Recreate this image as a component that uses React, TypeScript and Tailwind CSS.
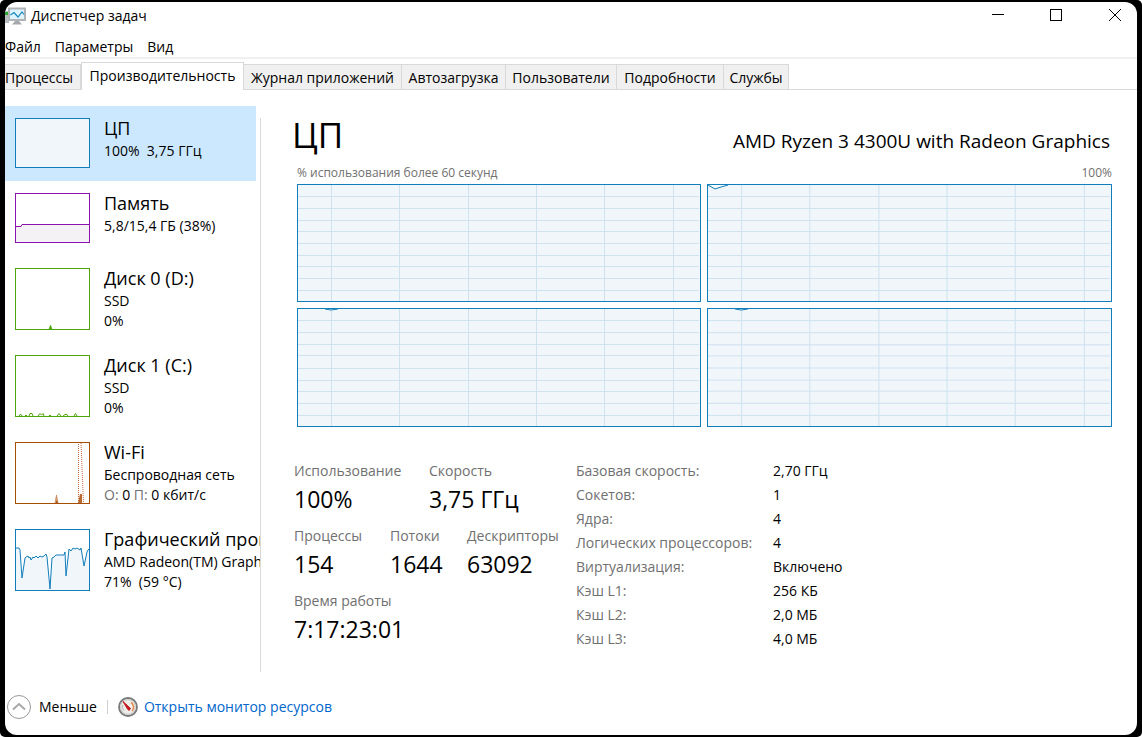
import type { ReactNode } from "react";

const tabs = [
  { label: "Процессы", cls: "w-[76px] justify-start" },
  { label: "Производительность", cls: "w-[163px] justify-center" },
  { label: "Журнал приложений", cls: "w-[158px] justify-center" },
  { label: "Автозагрузка", cls: "w-[104px] justify-center" },
  { label: "Пользователи", cls: "w-[111px] justify-center" },
  { label: "Подробности", cls: "w-[107px] justify-center" },
  { label: "Службы", cls: "w-[65px] justify-center" },
];

const gpuLine =
  "0,18 3,18 4,20 6,48 9,28 10,27 12,26 13,28 14,27 15,30 17,27 18,28 20,26 22,28 24,26 26,27 28,26 30,24 31,27 34,59 36,28 38,27 40,25 48,25 49,22 50,46 53,19 55,21 57,18 59,19 61,18 64,20 65,18 68,36 71,22 72,20 74,18";

type Resource = { name: string; lines: ReactNode[]; short?: boolean; border: string; graph: ReactNode };

const resources: Resource[] = [
  {
    name: "ЦП",
    lines: ["100%  3,75 ГГц"],
    short: true,
    border: "border-[#117dbb] bg-[#f1f6fa]",
    graph: null,
  },
  {
    name: "Память",
    lines: ["5,8/15,4 ГБ (38%)"],
    short: true,
    border: "border-[#8b12ae] bg-white",
    graph: (
      <>
        <path d="M0 32.500H5L6 30.500H73V48H0Z" fill="#f4f2f4" />
        <path d="M0 32.500H5L6 30.500H73" fill="none" stroke="#8b12ae" />
      </>
    ),
  },
  {
    name: "Диск 0 (D:)",
    lines: ["SSD", "0%"],
    border: "border-[#4da60c] bg-white",
    graph: <path d="M33 60L34.500 56L36 60Z" fill="#4da60c" stroke="#4da60c" strokeWidth=".5" />,
  },
  {
    name: "Диск 1 (C:)",
    lines: ["SSD", "0%"],
    border: "border-[#4da60c] bg-white",
    graph: (
      <path
        d="M3 60L4.500 58L6 60M9 60L10 59L11 60M13 60L14 57.500H16L17 60M22 60L24 57.500L25.500 59L27 57.500L28 60M33 60L34 59L35 60M41 60L43 57.500L45 60M47 60L49 58.500H51L52 60M58 60L59.500 57.500L61 60"
        fill="none"
        stroke="#4da60c"
      />
    ),
  },
  {
    name: "Wi-Fi",
    lines: [
      "Беспроводная сеть",
      <>
        <span className="text-[#707070]">О:</span> 0 <span className="text-[#707070]">П:</span> 0 кбит/с
      </>,
    ],
    border: "border-[#a74f01] bg-white",
    graph: (
      <>
        <path d="M39 60L40.500 52L42 60" fill="#d9a680" stroke="#c67a4c" strokeWidth=".7" />
        <path d="M40 60L40.500 57L42 60Z" fill="#a74f01" />
        <path d="M62.500 60V0M65 0L66 24L67.500 60" fill="none" stroke="#c8663a" strokeDasharray="1 1" />
        <path d="M62 60L64 51H66V60Z" fill="#b86a30" />
      </>
    ),
  },
  {
    name: "Графический процессор 0",
    lines: ["AMD Radeon(TM) Graphics", "71%  (59 °C)"],
    border: "border-[#117dbb] bg-white",
    graph: (
      <>
        <polygon points={`${gpuLine} 74,60 0,60`} fill="#f1f6fa" />
        <polyline points={gpuLine} fill="none" stroke="#117dbb" />
      </>
    ),
  },
];

const rows: [string, string][] = [
  ["Базовая скорость:", "2,70 ГГц"],
  ["Сокетов:", "1"],
  ["Ядра:", "4"],
  ["Логических процессоров:", "4"],
  ["Виртуализация:", "Включено"],
  ["Кэш L1:", "256 КБ"],
  ["Кэш L2:", "2,0 МБ"],
  ["Кэш L3:", "4,0 МБ"],
];

function CoreGraph({ dip }: { dip?: string }) {
  return (
    <div className="border border-[#117dbb] bg-[#f1f6fa]">
      <svg className="block h-full w-full" viewBox="0 0 402 116" preserveAspectRatio="none" aria-hidden="true">
        <g stroke="#cee2f0" shapeRendering="crispEdges">
          {[11, 23, 35, 46, 58, 70, 81, 93, 105].map((y) => (
            <path key={y} d={`M0 ${y + 0.5}H401`} vectorEffect="non-scaling-stroke" />
          ))}
          {[33, 101, 170, 238, 306, 375].map((x) => (
            <path key={x} d={`M${x + 0.5} 0V116`} vectorEffect="non-scaling-stroke" />
          ))}
        </g>
        {dip && <path d={dip} fill="#fff" fillOpacity=".6" stroke="#117dbb" vectorEffect="non-scaling-stroke" />}
      </svg>
    </div>
  );
}

function Stat({ label, value }: { label: string; value: string }) {
  return (
    <div className="h-[65px] whitespace-nowrap">
      <dt className="text-sm leading-6 text-[#707070]">{label}</dt>
      <dd className="text-[23px] leading-8">{value}</dd>
    </div>
  );
}

export default function App() {
  return (
    <div className="flex min-h-screen flex-col rounded-[5px] bg-black px-[5px] py-0.5 font-['Open_Sans','Noto_Sans',sans-serif] text-sm text-black">
      <div className="flex flex-1 flex-col overflow-hidden rounded-xl bg-white">
        <header className="flex h-7 items-center">
          <svg className="h-5 w-[22px] shrink-0" viewBox="0 0 22 20" aria-hidden="true">
            <rect x="0" y="5" width="4" height="12" fill="#b9bcbe" />
            <rect x="0" y="6" width="3" height="3" fill="#2ca82c" />
            <rect x="4" y="2.500" width="16" height="11.500" fill="#dff3fd" stroke="#b0b4b7" strokeWidth="2" />
            <path d="M5.500 9L9 6.500L13 11L17 6L19 8.500" fill="none" stroke="#1487bd" strokeWidth="1.200" />
            <path d="M10 15H14L17 18.500H7Z" fill="#a5a9ac" />
          </svg>
          <h1 className="ml-1 flex-1 text-sm">Диспетчер задач</h1>
          <button aria-label="Свернуть" className="flex h-[26px] w-[58px] items-center justify-center self-start">
            <svg className="h-3 w-3" viewBox="0 0 12 12"><path d="M0 5.500H12" stroke="#000" /></svg>
          </button>
          <button aria-label="Развернуть" className="flex h-[26px] w-[58px] items-center justify-center self-start">
            <svg className="h-3 w-3" viewBox="0 0 12 12"><rect x=".5" y=".5" width="11" height="11" fill="none" stroke="#000" /></svg>
          </button>
          <button aria-label="Закрыть" className="-mr-2 flex h-[26px] w-[60px] items-center justify-center self-start">
            <svg className="h-3 w-3" viewBox="0 0 12 12"><path d="M0 0L12 12M12 0L0 12" stroke="#000" /></svg>
          </button>
        </header>
        <nav className="flex h-[29px] items-center gap-3.5 border-b-2 border-[#f0f0f0] pt-1.5">
          <button>Файл</button>
          <button>Параметры</button>
          <button>Вид</button>
        </nav>
        <div role="tablist" className="flex h-[31px] shrink-0 items-end border-b border-[#d9d9d9]">
          {tabs.map((t, i) =>
            i === 1 ? (
              <button
                key={t.label}
                role="tab"
                aria-selected="true"
                className={`${t.cls} -mb-px flex h-7 items-center border border-b-0 border-[#d9d9d9] bg-white pb-0.5 whitespace-nowrap`}
              >
                {t.label}
              </button>
            ) : (
              <button
                key={t.label}
                role="tab"
                aria-selected="false"
                className={`${t.cls} flex h-[25px] items-center border-t border-r border-[#d9d9d9] bg-[#f0f0f0] pt-0.5 whitespace-nowrap`}
              >
                {t.label}
              </button>
            )
          )}
        </div>

        <div className="flex flex-1 pt-4">
          <ul className="w-[255px] shrink-0 overflow-hidden">
            {resources.map((r, i) => (
              <li key={r.name}>
                <button
                  className={`flex w-[251px] items-start gap-3.5 pl-2.5 text-left ${r.short ? "h-[75px]" : "h-[87px]"} ${
                    i === 0 ? "bg-[#cce8ff]" : ""
                  }`}
                >
                  <span className={`mt-3 w-[75px] shrink-0 border ${r.short ? "h-[50px]" : "h-[62px]"} ${r.border}`}>
                    <svg className="block h-full w-full" viewBox={r.short ? "0 0 73 48" : "0 0 73 60"} aria-hidden="true">
                      {r.graph}
                    </svg>
                  </span>
                  <span className="pt-[9px] whitespace-pre">
                    <span className="block text-lg leading-[26px]">{r.name}</span>
                    {r.lines.map((l, k) => (
                      <span key={k} className="block text-sm leading-5">
                        {l}
                      </span>
                    ))}
                  </span>
                </button>
              </li>
            ))}
          </ul>
          <div className="mt-3 w-px bg-[#d9d9d9]" />
          <main className="min-w-0 flex-1 pr-[25px] pl-[31px]">
            <div className="flex h-[59px] items-baseline justify-between pr-0.5">
              <h2 className="text-[35px] leading-[58px]">ЦП</h2>
              <p className="text-[19px]">AMD Ryzen 3 4300U with Radeon Graphics</p>
            </div>
            <div className="mb-[3px] flex justify-between pl-[5px] text-xs leading-4 text-[#707070]">
              <span>% использования более 60 секунд</span>
              <span>100%</span>
            </div>
            <div className="grid grid-cols-[404fr_405fr] grid-rows-[118px_119px] gap-1.5 pl-[5px]">
              <CoreGraph />
              <CoreGraph dip="M0 0L7 4L13 2L20 0" />
              <CoreGraph dip="M27 0L33 1L40 0" />
              <CoreGraph dip="M27 0L33 1L40 0" />
            </div>
            <div className="mt-8 flex pl-0.5">
              <dl className="w-[282px] shrink-0">
                <div className="grid grid-cols-[135px_1fr]">
                  <Stat label="Использование" value="100%" />
                  <Stat label="Скорость" value="3,75 ГГц" />
                </div>
                <div className="grid grid-cols-[96px_77px_1fr]">
                  <Stat label="Процессы" value="154" />
                  <Stat label="Потоки" value="1644" />
                  <Stat label="Дескрипторы" value="63092" />
                </div>
                <Stat label="Время работы" value="7:17:23:01" />
              </dl>
              <table className="h-48 text-sm leading-6">
                <tbody>
                  {rows.map(([k, v]) => (
                    <tr key={k}>
                      <th scope="row" className="w-[197px] p-0 text-left font-normal text-[#707070]">{k}</th>
                      <td className="p-0">{v}</td>
                    </tr>
                  ))}
                </tbody>
              </table>
            </div>
          </main>
        </div>

        <footer className="flex h-[63px] items-center pt-[7px] pl-0.5">
          <button className="flex items-center gap-2">
            <svg className="h-6 w-6" viewBox="0 0 24 24" fill="none" aria-hidden="true">
              <circle cx="12" cy="12" r="11.500" stroke="#999" />
              <path d="M6 14.500L12 9L18 14.500" stroke="#a8a8a8" strokeWidth="2" />
            </svg>
            Меньше
          </button>
          <span className="mx-2.5 h-3.5 w-px bg-[#d0d0d0]" />
          <a href="#resmon" className="flex items-center gap-1.5 text-[#0066cc]">
            <svg className="h-5 w-5" viewBox="0 0 20 20" aria-hidden="true">
              <circle cx="10" cy="10" r="9" fill="#eeeeea" stroke="#77797a" strokeWidth="1.800" />
              <circle cx="10" cy="10" r="7.300" fill="none" stroke="#c9cac6" />
              <path d="M13 5.500A5.500 5.500 0 0 1 14 14" fill="none" stroke="#e8894a" strokeWidth="1.500" />
              <path d="M6 13.500A5 5 0 0 1 4.800 8" fill="none" stroke="#b5b5b0" />
              <path d="M5 4.500L12.500 11.500L11 13.500L9.500 12Z" fill="#c4161c" stroke="#c4161c" />
            </svg>
            Открыть монитор ресурсов
          </a>
        </footer>
      </div>
    </div>
  );
}
